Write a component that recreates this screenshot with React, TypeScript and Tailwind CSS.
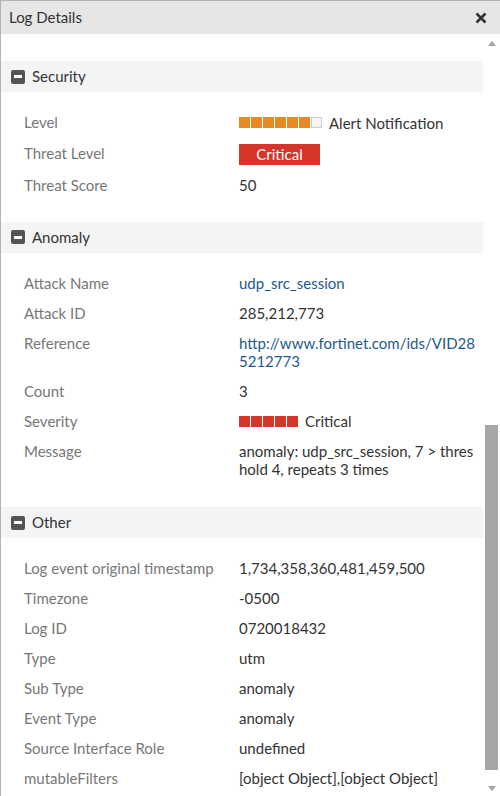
import React from "react";

type Row = { label: string; value: React.ReactNode };

function Bars({ filled, total, color }: { filled: number; total: number; color: string }) {
  return (
    <span className="inline-flex gap-px mr-[7px] align-middle">
      {Array.from({ length: total }).map((_, i) =>
        i < filled ? (
          <span key={i} className="w-[11px] h-[11px]" style={{ backgroundColor: color }} />
        ) : (
          <span key={i} className="w-[11px] h-[11px] border border-[#cccccc] bg-[#f5f5f5]" />
        )
      )}
    </span>
  );
}

function SectionHeader({ title }: { title: string }) {
  return (
    <div className="h-[31px] bg-[#f4f4f4] flex items-center pl-[10px] mr-[1px]">
      <span className="w-[14px] h-[14px] rounded-[2px] bg-[#555555] flex items-center justify-center">
        <span className="w-[8px] h-[3px] bg-white" />
      </span>
      <span className="ml-[7px] text-[15px] text-[#333333]">{title}</span>
    </div>
  );
}

function Section({ title, rows }: { title: string; rows: Row[] }) {
  return (
    <div>
      <SectionHeader title={title} />
      <div className="pt-[15px] pb-[16px]">
        {rows.map((r, i) => (
          <div key={i} className="grid grid-cols-[215px_1fr] pl-[23px] pr-[6px] py-[6px] text-[15px] leading-[18px]">
            <div className="text-[#777777]">{r.label}</div>
            <div className="text-[#333333] break-all">{r.value}</div>
          </div>
        ))}
      </div>
    </div>
  );
}

export default function App() {
  const link = "text-[#1e5a8e]";
  const security: Row[] = [
    {
      label: "Level",
      value: (
        <span className="inline-flex items-center">
          <Bars filled={6} total={7} color="#e68a25" />
          Alert Notification
        </span>
      ),
    },
    {
      label: "Threat Level",
      value: (
        <span className="flex items-center justify-center w-[81px] h-[21px] -mb-px bg-[#d6352a] text-white">
          Critical
        </span>
      ),
    },
    { label: "Threat Score", value: "50" },
  ];
  const anomaly: Row[] = [
    { label: "Attack Name", value: <span className={link}>udp_src_session</span> },
    { label: "Attack ID", value: "285,212,773" },
    { label: "Reference", value: <span className={link}>http://www.fortinet.com/ids/VID285212773</span> },
    { label: "Count", value: "3" },
    {
      label: "Severity",
      value: (
        <span className="inline-flex items-center">
          <Bars filled={5} total={5} color="#d6352a" />
          Critical
        </span>
      ),
    },
    { label: "Message", value: "anomaly: udp_src_session, 7 > threshold 4, repeats 3 times" },
  ];
  const other: Row[] = [
    { label: "Log event original timestamp", value: "1,734,358,360,481,459,500" },
    { label: "Timezone", value: "-0500" },
    { label: "Log ID", value: "0720018432" },
    { label: "Type", value: "utm" },
    { label: "Sub Type", value: "anomaly" },
    { label: "Event Type", value: "anomaly" },
    { label: "Source Interface Role", value: "undefined" },
    { label: "mutableFilters", value: "[object Object],[object Object]" },
  ];

  return (
    <div
      className="w-[500px] h-[796px] overflow-hidden bg-white border-l border-t border-[#b3b3b3] flex flex-col"
      style={{ fontFamily: "Lato, 'Open Sans', sans-serif" }}
    >
      <div className="h-[33px] shrink-0 bg-[#e6e6e6] flex items-center justify-between pl-[8px] pr-[13px]">
        <span className="text-[15px] text-[#333333]">Log Details</span>
        <svg width="12" height="12" viewBox="0 0 12 12">
          <path d="M1.5 1.5 L10.5 10.5 M10.5 1.5 L1.5 10.5" stroke="#333333" strokeWidth="2.6" strokeLinecap="butt" />
        </svg>
      </div>
      <div className="flex flex-1 min-h-0">
        <div className="flex-1 min-w-0 pt-[27px] overflow-hidden">
          <Section title="Security" rows={security} />
          <div className="mt-[6px]">
            <Section title="Anomaly" rows={anomaly} />
          </div>
          <div className="mt-[7px]">
            <Section title="Other" rows={other} />
          </div>
        </div>
        <div className="w-[16px] shrink-0 flex flex-col items-center relative">
          <svg className="mt-[7px]" width="8" height="5" viewBox="0 0 8 5">
            <path d="M0 5 L4 0 L8 5 Z" fill="#a3a3a3" />
          </svg>
          <div className="absolute left-[1px] top-[391px] w-[13px] h-[345px] bg-[#a6a6a6]" />
          <svg className="absolute bottom-[5px] left-[4px]" width="8" height="5" viewBox="0 0 8 5">
            <path d="M0 0 L8 0 L4 5 Z" fill="#a3a3a3" />
          </svg>
        </div>
      </div>
    </div>
  );
}
